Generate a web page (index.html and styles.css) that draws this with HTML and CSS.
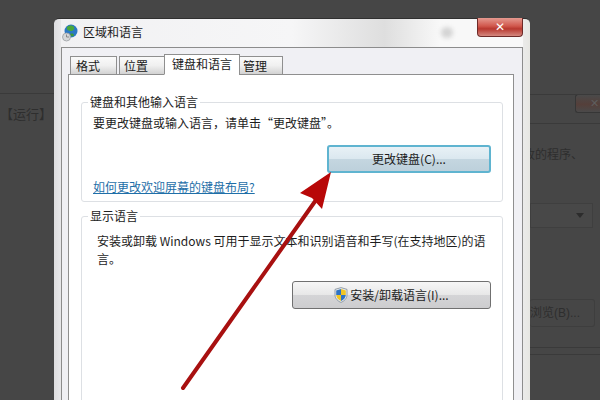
FILE: index.html
```html
<!DOCTYPE html>
<html lang="zh-CN">
<head>
<meta charset="utf-8">
<title>区域和语言</title>
<link rel="stylesheet" href="styles.css">
</head>
<body>
<div class="desktop">
  <div class="back-window">
    <div class="back-rule back-rule-top"></div>
    <div class="back-label">【运行】</div>
    <div class="back-close">✕</div>
    <div class="back-rule back-rule-right"></div>
    <div class="back-text">改的程序、</div>
    <div class="back-select"><span class="back-caret"></span></div>
    <div class="back-browse">浏览(B)...</div>
    <div class="back-rule back-rule-low"></div>
  </div>

  <section class="window">
    <header class="titlebar">
      <svg class="globe" width="16" height="18" viewBox="0 0 16 18">
        <circle cx="9" cy="7" r="6.5" fill="#2b78c4"/>
        <path d="M5 3c2-2 6-2 7 0 1 2-1 4-3 4S4 6 5 3z" fill="#4aa83c"/>
        <path d="M8 10c2-1 4 0 4 1s-2 2-3 1z" fill="#3f9a3a"/>
        <circle cx="4.5" cy="13" r="4" fill="#d6d8da" stroke="#9a9ea2" stroke-width=".8"/>
        <path d="M4.5 10.5V13H7" fill="none" stroke="#777" stroke-width=".8"/>
      </svg>
      <h1 class="title">区域和语言</h1>
      <div class="caption-smudge"></div>
      <button class="close" aria-label="关闭">✕</button>
    </header>
    <div class="sheet">
      <nav class="tabs">
        <span class="tab">格式</span>
        <span class="tab">位置</span>
        <span class="tab active">键盘和语言</span>
        <span class="tab">管理</span>
      </nav>
      <div class="page">
        <fieldset class="group group-keyboard">
          <legend>键盘和其他输入语言</legend>
          <p class="lead">要更改键盘或输入语言，请单击“更改键盘”。</p>
          <div class="actions"><button class="btn focused">更改键盘(C)...</button></div>
          <a class="help" href="#">如何更改欢迎屏幕的键盘布局?</a>
        </fieldset>
        <fieldset class="group group-display">
          <legend>显示语言</legend>
          <p class="body-text">安装或卸载 Windows 可用于显示文本和识别语音和手写(在支持地区)的语言。</p>
          <div class="actions">
            <button class="btn wide">
              <svg class="shield" width="14" height="16" viewBox="0 0 14 16">
                <path d="M7 .6 13 2.400V8c0 3.600-3 6.200-6 7.400C4 14.200 1 11.600 1 8V2.400z" fill="#e8ecef" stroke="#7d8a96" stroke-width=".8"/>
                <path d="M7 2 2.200 3.400V8H7z" fill="#2f73c4"/>
                <path d="M7 2l4.800 1.400V8H7z" fill="#f2c623"/>
                <path d="M2.200 8H7v6C4.500 13 2.400 10.800 2.200 8z" fill="#f2c623"/>
                <path d="M11.800 8H7v6c2.500-1 4.600-3.200 4.800-6z" fill="#2f73c4"/>
              </svg>
              <span>安装/卸载语言(I)...</span>
            </button>
          </div>
        </fieldset>
      </div>
    </div>
  </section>

  <svg class="arrow" width="600" height="400" viewBox="0 0 600 400">
    <path d="M183 388 316 200" fill="none" stroke="#a81010" stroke-width="4" stroke-linecap="round"/>
    <path d="M331 172 300 193 312 198 322 209z" fill="#b80808"/>
  </svg>
</div>
</body>
</html>
```

FILE: styles.css
```css
* { box-sizing: border-box; }
html, body { margin: 0; padding: 0; }
body { font-family: "Liberation Sans", "Noto Sans CJK SC", sans-serif; }

.desktop {
  position: relative;
  width: 600px;
  height: 400px;
  overflow: hidden;
  background: #464646;
}

.back-window { position: absolute; inset: 0; color: #2a2a2a; }
.back-rule { position: absolute; height: 1px; background: #3a3a3a; }
.back-rule-top { left: 0; top: 93px; width: 54px; }
.back-rule-right { left: 530px; top: 94px; width: 70px; }
.back-rule-right::after { content: ""; position: absolute; left: 0; top: 29px; width: 70px; height: 1px; background: #3a3a3a; }
.back-rule-low { left: 530px; top: 347px; width: 70px; }
.back-rule-low::after { content: ""; position: absolute; left: 0; top: 7px; width: 70px; height: 1px; background: #3a3a3a; }
.back-label { position: absolute; left: 0; top: 107px; font-size: 13px; line-height: 16px; color: #2e2e2e; white-space: nowrap; }
.back-text { position: absolute; left: 523px; top: 147px; font-size: 12px; line-height: 16px; color: #2e2e2e; white-space: nowrap; }
.back-close {
  position: absolute; left: 575px; top: 94px; width: 25px; height: 19px;
  border: 1px solid #363636; border-right: 0; border-radius: 3px 0 0 3px;
  background: linear-gradient(#4a4a4a, #553f3a 55%, #4a4a4a);
  font-size: 11px; line-height: 17px; padding-left: 14px; color: #5e5e5e;
}
.back-select {
  position: absolute; left: 530px; top: 203px; width: 63px; height: 25px;
  border: 1px solid #3f3f3f; background: #484848;
  display: flex; align-items: center; justify-content: flex-end; padding-right: 8px;
}
.back-caret { width: 0; height: 0; border: 4px solid transparent; border-top: 5px solid #2c2c2c; border-bottom: 0; }
.back-browse {
  position: absolute; left: 530px; top: 299px; width: 65px; height: 28px;
  border: 1px solid #3e3e3e; border-left: 0; border-radius: 3px;
  font-size: 12px; line-height: 26px; color: #2e2e2e; white-space: nowrap; overflow: hidden;
}

.window {
  position: absolute;
  left: 54px;
  top: 18px;
  width: 476px;
  height: 400px;
  padding: 0 7px;
  background: linear-gradient(90deg, #dcdcde, #f2f2f4 3%, #f0f0f2 97%, #e6e6e2);
  border-top: 1px solid #303030;
  border-radius: 5px 5px 0 0;
}

.titlebar {
  position: relative;
  display: flex;
  align-items: center;
  height: 28px;
  padding-bottom: 2px;
  background: linear-gradient(90deg, #f1f1f3, #f6f6f7 50%, #dedede 70%, #f8f8f8 82%);
}
.globe { flex: none; margin-left: 1px; margin-top: 1px; }
.title {
  margin: 0 0 0 5px;
  font: 400 12px/16px "Noto Sans CJK SC", sans-serif;
  color: #1c1c1c;
}
.caption-smudge { position: absolute; left: 380px; top: 8px; width: 12px; height: 11px; border-radius: 50%; background: #d4d4d4; filter: blur(2px); }
.close {
  position: absolute;
  right: 0;
  top: -1px;
  width: 46px;
  height: 19px;
  padding: 0;
  border: 1px solid #6d2a28;
  border-top: 0;
  border-radius: 0 0 4px 4px;
  background: linear-gradient(#e59a90, #d0574c 45%, #b8382f 60%, #d4887f);
  color: #fff;
  font: 700 12px/17px "DejaVu Sans", sans-serif;
}

.sheet {
  height: 372px;
  padding: 0 8px 0 6px;
  background: #f0f0f4;
  border: 1px solid #8c8c8c;
  border-bottom: 0;
}

.tabs { display: flex; align-items: flex-end; height: 27px; padding-left: 2px; margin-bottom: -1px; position: relative; z-index: 1; }
.tab {
  height: 19px;
  border: 1px solid #8f8f8f;
  background: linear-gradient(#fafafa, #f0f0f0 50%, #d2d2d2);
  font: 400 12px/18px "Noto Sans CJK SC", sans-serif;
  color: #1a1a1a;
  text-align: left;
}
.tab:nth-child(1) { width: 47px; margin-right: 2px; padding-left: 5px; }
.tab:nth-child(2) { width: 46px; margin-right: -1px; padding-left: 4px; }
.tab.active {
  width: 76px;
  height: 21px;
  margin-right: -1px;
  background: #fff;
  border-bottom-color: #fff;
  text-align: center;
}
.tab:nth-child(4) { width: 44px; padding-left: 3px; }

.page {
  height: 346px;
  padding: 19px 10px 0 12px;
  background: #fff;
  border: 1px solid #8f8f8f;
  border-bottom: 0;
}

.group {
  margin: 0;
  padding: 0 0 0 11px;
  min-width: 0;
  border: 1px solid #dde0e4;
  border-radius: 3px;
}
.group legend {
  margin-left: -5px;
  padding: 0 2px;
  font: 400 12px/16px "Noto Sans CJK SC", sans-serif;
  color: #222;
}
.group-keyboard { height: 108px; margin-bottom: 6px; }
.group-display { height: 220px; }

.lead, .body-text {
  margin: 0;
  font: 400 12px/18px "Noto Sans CJK SC", sans-serif;
  color: #1d1d1d;
}
.lead { padding-top: 4px; height: 35px; }
.body-text { padding: 8px 10px 0 4px; }

.actions { display: flex; justify-content: flex-end; padding-right: 11px; }
.group-display .actions { padding-top: 13px; }
.btn {
  display: flex;
  align-items: center;
  justify-content: center;
  gap: 2px;
  height: 28px;
  padding: 0;
  border: 1px solid #707070;
  border-radius: 3px;
  background: linear-gradient(#f6f6f6, #e8e8e8 48%, #d4d4d6 52%, #cdcdcf);
  font: 400 12px/14px "Noto Sans CJK SC", sans-serif;
  color: #1c1c1c;
}
.btn.focused {
  width: 164px;
  border: 2px solid #5fb4d0;
  background: linear-gradient(#e8f1f6, #dbe8ef 48%, #c4d6e0 52%, #bdd0db);
}
.btn.wide { width: 199px; }
.shield { flex: none; }

.help {
  display: block;
  margin-top: 7px;
  font: 400 12px/14px "Noto Sans CJK SC", sans-serif;
  color: #1f6fa8;
  text-decoration: underline;
}

.arrow { position: absolute; left: 0; top: 0; pointer-events: none; }
```
